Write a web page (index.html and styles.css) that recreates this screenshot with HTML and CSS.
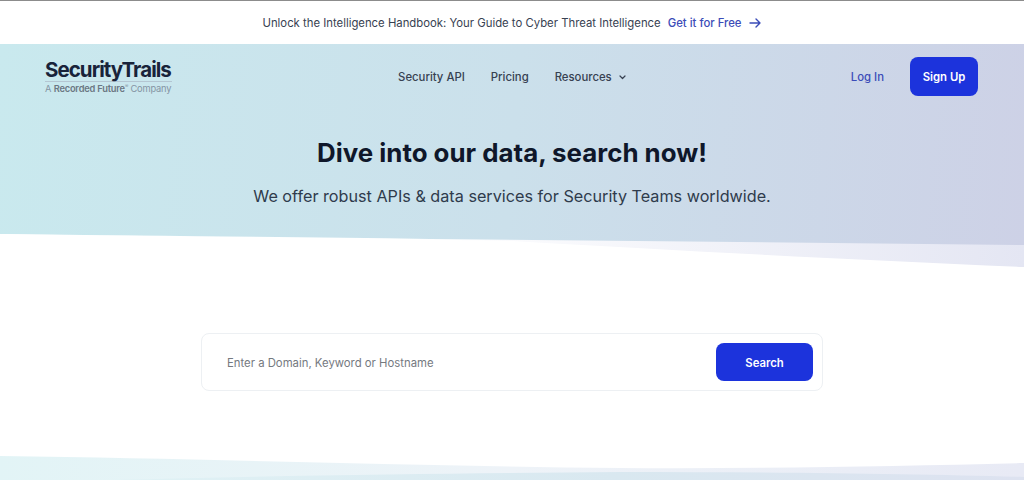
FILE: index.html
```html
<!DOCTYPE html>
<html lang="en">
<head>
    <meta charset="UTF-8">
    <title>SecurityTrails</title>
    <link rel="stylesheet" href="styles.css">
</head>
<body>
    <div class="promo">
        <span>Unlock the Intelligence Handbook: Your Guide to Cyber Threat Intelligence</span>
        <a class="promo-link" href="#">Get it for Free</a>
        <svg class="promo-arrow" width="12" height="10" viewBox="0 0 12 10" fill="none" stroke="currentColor" stroke-width="1.4" stroke-linecap="round" stroke-linejoin="round">
            <path d="M1 5h10M7 1l4 4-4 4"/>
        </svg>
    </div>

    <section class="hero">
        <header class="nav">
            <a class="logo" href="#">
                <span class="logo-name">SecurityTrails</span>
                <span class="logo-sub">A <b>Recorded Future</b><sup>®</sup> Company</span>
            </a>
            <nav class="nav-links">
                <a href="#">Security API</a>
                <a href="#">Pricing</a>
                <a href="#">Resources
                    <svg width="7" height="5" viewBox="0 0 7 5" fill="none" stroke="currentColor" stroke-width="1.2" stroke-linecap="round" stroke-linejoin="round">
                        <path d="M1 1l2.5 2.5L6 1"/>
                    </svg>
                </a>
            </nav>
            <div class="nav-actions">
                <a class="login" href="#">Log In</a>
                <a class="btn signup" href="#">Sign Up</a>
            </div>
        </header>

        <h1>Dive into our data, search now!</h1>
        <p class="lead">We offer robust APIs &amp; data services for Security Teams worldwide.</p>

        <!-- slanted bottom edge of the hero -->
        <svg class="hero-edge" viewBox="0 0 1024 33" preserveAspectRatio="none">
            <defs>
                <linearGradient id="edgeFade" x1="0" x2="1" y1="0" y2="0">
                    <stop offset="0.4" stop-color="#ffffff"/>
                    <stop offset="1" stop-color="#e4e6f3"/>
                </linearGradient>
            </defs>
            <path d="M0 0C160 2 300 3 430 5L1024 11V33H0Z" fill="url(#edgeFade)"/>
            <path d="M0 0C200 3 400 5 512 7C700 18 860 26 1024 33H0Z" fill="#ffffff"/>
        </svg>
    </section>

    <section class="search-section">
        <form class="search-box">
            <input class="search-input" type="text" placeholder="Enter a Domain, Keyword or Hostname">
            <button class="btn search-btn" type="button">Search</button>
        </form>
    </section>

    <svg class="foot-wave" viewBox="0 0 1024 24" preserveAspectRatio="none">
        <defs>
            <linearGradient id="waveBack" x1="0" x2="1" y1="0" y2="0">
                <stop offset="0" stop-color="#e2f4f6"/>
                <stop offset="0.5" stop-color="#eef3f8"/>
                <stop offset="1" stop-color="#e8eaf5"/>
            </linearGradient>
            <linearGradient id="waveFront" x1="0" x2="1" y1="0" y2="0">
                <stop offset="0" stop-color="#e0f2f5"/>
                <stop offset="0.55" stop-color="#d9e8f0"/>
                <stop offset="1" stop-color="#dde2f0"/>
            </linearGradient>
        </defs>
        <path d="M0 0C220 3 420 10 620 12C760 13 900 10 1024 7V24H0Z" fill="url(#waveBack)"/>
        <path d="M110 24C300 19 480 17 620 16C780 16 920 18 1024 21V24Z" fill="url(#waveFront)"/>
    </svg>
</body>
</html>
```

FILE: styles.css
```css
* {
    box-sizing: border-box;
}

html, body {
    height: 480px;
    overflow: hidden;
}

body {
    margin: 0;
    background-color: #ffffff;
    color: #1f2937;
    font-family: "Inter", "Liberation Sans", sans-serif;
    display: flex;
    flex-direction: column;
}

a {
    color: inherit;
    text-decoration: none;
}

.promo {
    height: 44px;
    border-top: 1px solid #8c8c8c;
    display: flex;
    align-items: center;
    justify-content: center;
    font-size: 11.33px;
    color: #374151;
    padding-right: 1px;
}

.promo-link {
    margin-left: 7px;
    color: #3b4cb8;
    font-weight: 500;
}

.promo-arrow {
    margin-left: 7px;
    color: #3b4cb8;
}

.hero {
    position: relative;
    height: 223px;
    background: linear-gradient(95deg, #c9e9ee 0%, #cbe0eb 50%, #cdd1e6 100%);
    text-align: center;
}

.nav {
    height: 66px;
    padding: 13px 46px 0 45px;
    display: flex;
    align-items: flex-start;
    justify-content: space-between;
}

.logo {
    width: 127px;
    display: flex;
    flex-direction: column;
    text-align: left;
    padding-top: 2px;
}

.logo-name {
    font-size: 20.5px;
    line-height: 21px;
    font-weight: 700;
    letter-spacing: -0.95px;
    color: #18233a;
    border-bottom: 1px solid #b4c6d2;
    padding-bottom: 1px;
}

.logo-sub {
    font-size: 9.3px;
    line-height: 13px;
    color: #8494a3;
    letter-spacing: -0.2px;
    white-space: nowrap;
}

.logo-sub b {
    font-weight: 600;
    color: #6b7783;
}

.logo-sub sup {
    font-size: 5px;
    line-height: 0;
}

.nav-links {
    display: flex;
    gap: 26px;
    font-size: 11.33px;
    font-weight: 500;
    color: #374151;
    line-height: 41px;
    margin-left: 1px;
}

.nav-links svg {
    margin-left: 4px;
    vertical-align: 1px;
}

.nav-actions {
    display: flex;
    align-items: center;
    gap: 26px;
}

.login {
    font-size: 11.33px;
    font-weight: 500;
    color: #3b4cb8;
}

.btn {
    background-color: #1c33dc;
    color: #ffffff;
    border: none;
    border-radius: 8px;
    font-family: inherit;
    font-size: 11.33px;
    font-weight: 600;
    display: flex;
    align-items: center;
    justify-content: center;
}

.signup {
    width: 68px;
    height: 39px;
}

h1 {
    margin: 25px 0 0;
    font-size: 25.87px;
    line-height: 36px;
    font-weight: 700;
    color: #0f172a;
}

.lead {
    margin: 13px 0 0;
    font-size: 16.2px;
    line-height: 24px;
    color: #2f3b4c;
}

.hero-edge {
    position: absolute;
    left: 0;
    bottom: 0;
    width: 100%;
    height: 33px;
    display: block;
}

.search-section {
    flex: 1;
    padding-top: 66px;
    display: flex;
    justify-content: center;
}

.search-box {
    width: 622px;
    height: 58px;
    border: 1px solid #edf0f3;
    border-radius: 8px;
    padding: 0 9px 0 25px;
    display: flex;
    align-items: center;
}

.search-input {
    flex: 1;
    border: none;
    outline: none;
    background: transparent;
    font-family: inherit;
    font-size: 11.33px;
    color: #374151;
    padding: 1px 0 0;
}

.search-input::placeholder {
    color: #75797f;
    opacity: 1;
}

.search-btn {
    width: 97px;
    height: 38px;
    padding: 1px 0 0;
    cursor: pointer;
}

.foot-wave {
    display: block;
    width: 100%;
    height: 24px;
    flex-shrink: 0;
}
```
